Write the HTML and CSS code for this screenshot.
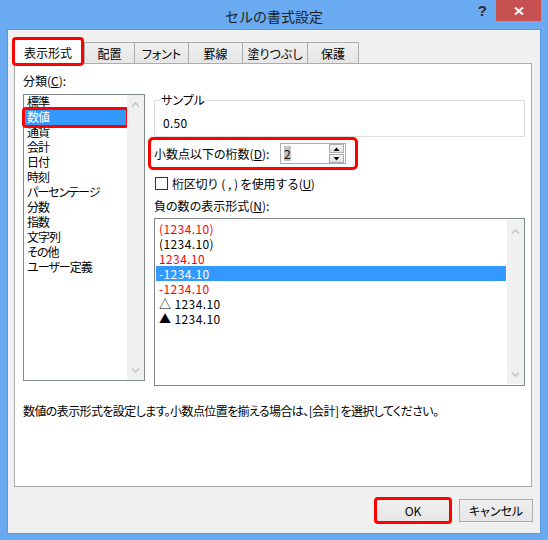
FILE: index.html
```html
<!DOCTYPE html>
<html lang="ja">
<head>
<meta charset="utf-8">
<title>セルの書式設定</title>
<link rel="stylesheet" href="styles.css">
</head>
<body>
<div class="window">
  <div class="titlebar">
    <div></div>
    <div class="title">セルの書式設定</div>
    <div class="controls">
      <span class="help">?</span>
      <span class="close"><svg width="10" height="8" viewBox="0 0 10 8"><path d="M1 0.5 L9 7.5 M9 0.5 L1 7.5" stroke="#fff" stroke-width="2" fill="none"/></svg></span>
    </div>
  </div>
  <div class="body">
    <div class="tabs">
      <div class="tab active">表示形式</div>
      <div class="tab t-haichi">配置</div>
      <div class="tab t-font">フォント</div>
      <div class="tab t-kei">罫線</div>
      <div class="tab t-nuri">塗りつぶし</div>
      <div class="tab t-hogo">保護</div>
    </div>
    <div class="panel">
      <div class="cols">
        <div class="left">
          <div class="label">分類(<u>C</u>):</div>
          <div class="listbox cat">
            <ul class="items">
              <li>標準</li>
              <li class="sel">数値</li>
              <li>通貨</li>
              <li>会計</li>
              <li>日付</li>
              <li>時刻</li>
              <li>パーセンテージ</li>
              <li>分数</li>
              <li>指数</li>
              <li>文字列</li>
              <li>その他</li>
              <li>ユーザー定義</li>
            </ul>
            <div class="scroll">
              <svg width="9" height="5" viewBox="0 0 9 5"><path d="M1 4.5 L4.5 1 L8 4.5" stroke="#c4c4c4" stroke-width="1.6" fill="none"/></svg>
              <svg width="9" height="5" viewBox="0 0 9 5"><path d="M1 0.5 L4.5 4 L8 0.5" stroke="#c4c4c4" stroke-width="1.6" fill="none"/></svg>
            </div>
          </div>
        </div>
        <div class="right">
          <fieldset class="sample">
            <legend>サンプル</legend>
            <div class="sample-val">0.50</div>
          </fieldset>
          <div class="decimal">
            <span class="dec-label">小数点以下の桁数(<u>D</u>):</span>
            <div class="spin">
              <span class="val"><span class="selval">2</span></span>
              <div class="spin-btns">
                <span class="sb"><svg width="7" height="4" viewBox="0 0 7 4"><path d="M0.5 4 L3.5 0.5 L6.5 4 Z" fill="#000"/></svg></span>
                <span class="sb"><svg width="7" height="4" viewBox="0 0 7 4"><path d="M0.5 0 L3.5 3.5 L6.5 0 Z" fill="#000"/></svg></span>
              </div>
            </div>
          </div>
          <div class="check-row">
            <span class="checkbox"></span>
            <span class="check-label">桁区切り (<span class="comma">,</span>) を使用する(<u>U</u>)</span>
          </div>
          <div class="label neg-label">負の数の表示形式(<u>N</u>):</div>
          <div class="listbox neg">
            <ul class="items">
              <li class="red">(1234.10)</li>
              <li>(1234.10)</li>
              <li class="red">1234.10</li>
              <li class="sel">-1234.10</li>
              <li class="red">-1234.10</li>
              <li>△ 1234.10</li>
              <li>▲ 1234.10</li>
            </ul>
            <div class="scroll">
              <svg width="9" height="5" viewBox="0 0 9 5"><path d="M1 4.5 L4.5 1 L8 4.5" stroke="#c4c4c4" stroke-width="1.6" fill="none"/></svg>
              <svg width="9" height="5" viewBox="0 0 9 5"><path d="M1 0.5 L4.5 4 L8 0.5" stroke="#c4c4c4" stroke-width="1.6" fill="none"/></svg>
            </div>
          </div>
        </div>
      </div>
      <p class="desc">数値の表示形式を設定します。小数点位置を揃える場合は、[会計] を選択してください。</p>
    </div>
    <div class="buttons">
      <button class="btn ok">OK</button>
      <button class="btn">キャンセル</button>
    </div>
  </div>
</div>
</body>
</html>
```
FILE: styles.css
```css
* { box-sizing: border-box; }
html, body { margin: 0; padding: 0; }
body {
  width: 548px;
  height: 540px;
  overflow: hidden;
  font-family: "Noto Sans CJK JP", "Noto Sans", sans-serif;
  font-size: 12px;
  color: #000;
  font-feature-settings: "palt";
}
.window {
  width: 548px;
  height: 540px;
  background: #6aaaf0;
  display: flex;
  flex-direction: column;
}
.titlebar {
  height: 30px;
  flex: none;
  display: grid;
  grid-template-columns: 1fr auto 1fr;
}
.title {
  font-size: 14px;
  line-height: 28px;
  padding-top: 2px;
  color: #1f1f1f;
  font-feature-settings: normal;
}
.controls {
  display: flex;
  justify-content: flex-end;
  align-items: flex-start;
  padding-right: 7px;
}
.help {
  font-family: "Liberation Sans", sans-serif;
  font-weight: bold;
  font-size: 15px;
  line-height: 22px;
  color: #2b2b2b;
  margin-right: 9px;
}
.close {
  width: 45px;
  height: 21px;
  background: #c75050;
  display: flex;
  align-items: center;
  justify-content: center;
}
.body {
  flex: 1;
  margin: 0 8px 7px;
  background: #f0f0f0;
  padding: 9px 8px 0 6px;
  box-shadow: 0 0 0 1px #5b99e0;
}
.tabs {
  display: flex;
  align-items: flex-end;
  height: 24px;
  position: relative;
  z-index: 1;
}
.tab {
  height: 21px;
  border-top: 1px solid #acacac;
  border-left: 1px solid #acacac;
  background: linear-gradient(#f0f0f0, #e5e5e5);
  text-align: center;
  line-height: 19px;
  padding-top: 1px;
}
.tab:last-child { border-right: 1px solid #acacac; }
.tab.active {
  width: 68px;
  height: 25px;
  margin-bottom: -1px;
  margin-right: 2px;
  background: #fff;
  border: 1px solid #acacac;
  border-bottom: none;
  line-height: 21px;
  padding-top: 2px;
  position: relative;
  z-index: 2;
  outline: 3px solid #f00;
  outline-offset: -1px;
  border-radius: 2px;
}
.t-haichi { width: 50px; }
.t-font { width: 54px; }
.t-kei { width: 54px; }
.t-nuri { width: 65px; }
.t-hogo { width: 52px; }
.panel {
  height: 424px;
  background: #fff;
  border: 1px solid #acacac;
  padding: 9px 6px 0 8px;
}
.cols {
  display: grid;
  grid-template-columns: 122px 371px;
  column-gap: 9px;
  align-items: start;
}
.label {
  line-height: 16px;
  height: 16px;
  white-space: nowrap;
}
.listbox {
  border: 1px solid #828790;
  background: #fff;
  display: flex;
}
.cat {
  height: 287px;
  margin-top: 5px;
}
.items {
  flex: 1;
  margin: 0;
  padding: 0 1px;
  list-style: none;
}
.items li {
  height: 15px;
  line-height: 15px;
  padding-left: 2px;
  white-space: nowrap;
}
.cat .items li {
  letter-spacing: -1px;
  line-height: 13px;
  padding-bottom: 2px;
}
.items li.sel {
  background: #3399ff;
  color: #fff;
}
.cat li.sel {
  outline: 3px solid #f00;
  border-radius: 1px;
}
.scroll {
  width: 17px;
  background: #f0f0f0;
  display: flex;
  flex-direction: column;
  justify-content: space-between;
  align-items: center;
  padding: 7px 0;
}
.neg .scroll { padding: 9px 0 7px; margin: 1px 0; }
.sample {
  margin: 19px 0 0;
  padding: 0;
  border: 1px solid #dcdcdc;
  min-width: 0;
}
.sample legend {
  padding: 0 1px;
  margin-left: 5px;
  line-height: 16px;
}
.sample-val {
  line-height: 16px;
  margin: 7px 0 5px 8px;
  letter-spacing: 0.3px;
}
.decimal {
  display: flex;
  align-items: center;
  width: 204px;
  height: 27px;
  margin: 3px 0 0 -3px;
  padding-left: 3px;
  outline: 3px solid #f00;
  border-radius: 2px;
}
.dec-label {
  width: 126px;
  white-space: nowrap;
}
.spin {
  width: 66px;
  height: 21px;
  border: 1px solid #abadb3;
  background: #fff;
  display: flex;
  align-items: center;
  justify-content: space-between;
}
.val { padding-left: 3px; }
.selval {
  display: inline-block;
  background: #c3c3c3;
  line-height: 15px;
  color: #111;
}
.spin-btns {
  display: flex;
  flex-direction: column;
  gap: 1px;
  margin-right: 1px;
}
.sb {
  width: 15px;
  height: 9px;
  border: 1px solid #acacac;
  background: linear-gradient(#f4f4f4, #e2e2e2);
  display: flex;
  align-items: center;
  justify-content: center;
}
.check-row {
  display: flex;
  align-items: center;
  height: 16px;
  margin-top: 8px;
  white-space: nowrap;
}
.check-label {
  font-feature-settings: normal;
  letter-spacing: -0.3px;
}
.comma { padding: 0 3px; }
.checkbox {
  width: 13px;
  height: 13px;
  border: 1px solid #333;
  background: #fff;
  margin: 0 4px 0 1px;
}
.neg-label { margin-top: 7px; }
.neg {
  height: 168px;
  margin-top: 4px;
}
.neg .items { padding-top: 2px; }
.neg .items li {
  padding-left: 3px;
  letter-spacing: 0.4px;
}
.items li.red { color: #f00; }
.desc {
  margin: 17px 0 0;
  line-height: 16px;
  white-space: nowrap;
  letter-spacing: -0.6px;
}
.buttons {
  display: flex;
  justify-content: flex-end;
  gap: 9px;
  margin-top: 12px;
  margin-right: -1px;
}
.btn {
  width: 74px;
  height: 23px;
  border: 1px solid #acacac;
  background: linear-gradient(#f0f0f0, #e5e5e5);
  font: inherit;
  color: #000;
  padding: 0;
  border-radius: 0;
}
.btn.ok {
  outline: 3px solid #f00;
  outline-offset: -1px;
  border-radius: 2px;
}
```
